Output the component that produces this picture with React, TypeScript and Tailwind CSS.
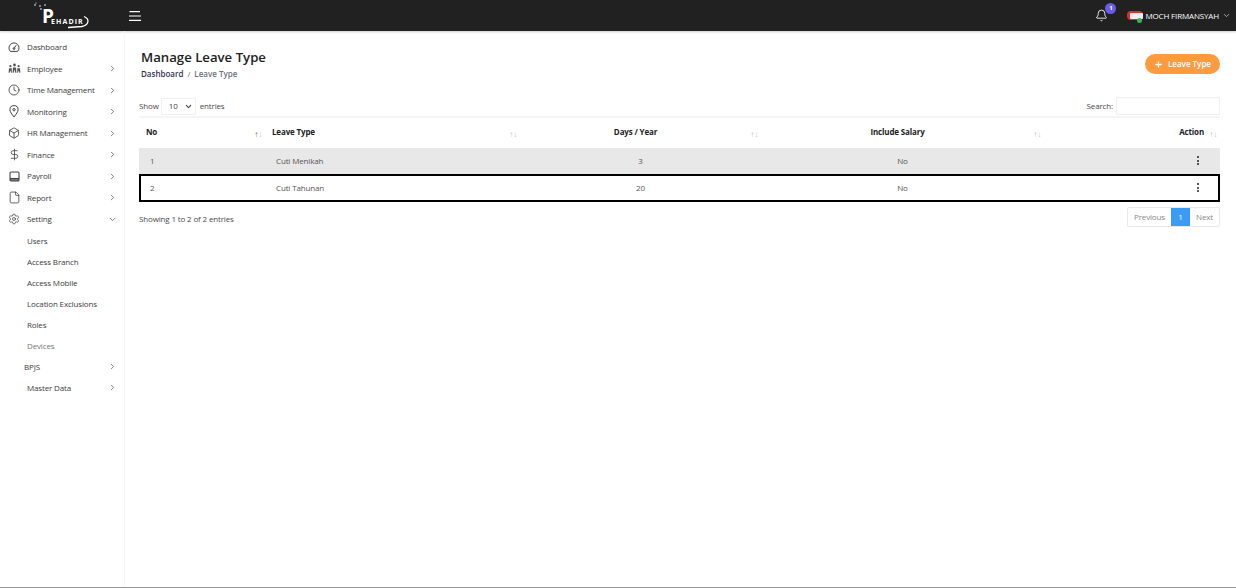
import { useState, type ReactNode } from 'react'
import { Bell, Box, ChevronDown, ChevronRight, Clock, DollarSign, File, Plus, Settings } from 'lucide-react'

interface NavItem {
  label: string
  icon?: ReactNode
  arrow?: 'right' | 'down'
  sub?: boolean
  indent?: string
  color?: string
}

function GaugeIcon() {
  return (
    <svg width="12" height="12" viewBox="0 0 12 12" fill="none" stroke="#444" strokeWidth="1">
      <path d="M2.4 10.4 A5 5 0 1 1 9.6 10.4 Z" strokeLinejoin="round" />
      <path d="M6 7.5 L8.2 4.2" />
      <circle cx="6" cy="7.6" r="0.9" />
    </svg>
  )
}

function PeopleIcon() {
  return (
    <svg width="13" height="11" viewBox="0 0 13 11" fill="#555">
      <circle cx="6.5" cy="2" r="1.4" />
      <circle cx="2.4" cy="3.2" r="1.1" />
      <circle cx="10.6" cy="3.2" r="1.1" />
      <path d="M4.6 9.8 L5 4.6 H8 L8.4 9.8 H7.3 L6.5 6.6 L5.7 9.8 Z" />
      <path d="M0.6 9.8 L1 5.2 H3.8 L3.8 9.8 H3 L2.4 7.2 L1.6 9.8 Z" />
      <path d="M9.2 9.8 L9.2 5.2 H12 L12.4 9.8 H11.4 L10.6 7.2 L10 9.8 Z" />
    </svg>
  )
}

function PinIcon() {
  return (
    <svg width="10" height="13" viewBox="0 0 11 14" fill="none" stroke="#444" strokeWidth="1.1">
      <path d="M5.5 13 C3 9.5 1 7.5 1 5 A4.5 4.5 0 0 1 10 5 C10 7.5 8 9.5 5.5 13 Z" />
      <circle cx="5.5" cy="5" r="1.3" />
    </svg>
  )
}

function PayrollIcon() {
  return (
    <svg width="11" height="11" viewBox="0 0 11 11" fill="none" stroke="#444" strokeWidth="1.1">
      <rect x="1" y="1" width="9" height="9" rx="1" />
      <path d="M1 7.5 H10" />
      <path d="M1 9 H10" strokeWidth="1.4" />
    </svg>
  )
}

const navItems: NavItem[] = [
  { label: 'Dashboard', icon: <GaugeIcon /> },
  { label: 'Employee', icon: <PeopleIcon />, arrow: 'right' },
  { label: 'Time Management', icon: <Clock size={12} strokeWidth={1.7} className="text-[#444]" />, arrow: 'right' },
  { label: 'Monitoring', icon: <PinIcon />, arrow: 'right' },
  { label: 'HR Management', icon: <Box size={12} strokeWidth={1.7} className="text-[#444]" />, arrow: 'right' },
  { label: 'Finance', icon: <DollarSign size={13} strokeWidth={1.5} className="text-[#444]" />, arrow: 'right' },
  { label: 'Payroll', icon: <PayrollIcon />, arrow: 'right' },
  { label: 'Report', icon: <File size={13} strokeWidth={1.5} className="text-[#444]" />, arrow: 'right' },
  { label: 'Setting', icon: <Settings size={12} strokeWidth={1.5} className="text-[#444]" />, arrow: 'down' },
  { label: 'Users', sub: true },
  { label: 'Access Branch', sub: true },
  { label: 'Access Mobile', sub: true },
  { label: 'Location Exclusions', sub: true },
  { label: 'Roles', sub: true },
  { label: 'Devices', sub: true, color: 'text-[#777]' },
  { label: 'BPJS', sub: true, arrow: 'right', indent: 'pl-[24px]' },
  { label: 'Master Data', sub: true, arrow: 'right' },
]

const rows = [
  { no: 1, name: 'Cuti Menikah', days: 3, salary: 'No' },
  { no: 2, name: 'Cuti Tahunan', days: 20, salary: 'No' },
]

function SortArrows({ active }: { active?: boolean }) {
  return (
    <span className="absolute top-[11px] right-[3px] text-[8px] leading-[10px] text-[#c4c4c4]">
      <span className={active ? 'text-[#666]' : ''}>↑</span>↓
    </span>
  )
}

function Logo() {
  return (
    <div className="relative ml-[34px] h-[31px] w-[56px] text-white">
      <svg className="absolute top-0 left-0" width="56" height="31" viewBox="0 0 56 31" fill="none">
        <g fill="#fff">
          <circle cx="1" cy="5" r="0.8" />
          <circle cx="6" cy="6" r="0.8" />
          <circle cx="11" cy="5" r="0.8" />
          <circle cx="7" cy="9" r="0.8" />
          <circle cx="2" cy="3" r="0.6" />
        </g>
        <path d="M50 16.5 C56 19 55 25 48 26.5 L34 27.5" stroke="#fff" strokeWidth="1.3" />
      </svg>
      <span className="absolute top-[5px] left-[8px] text-[19px] leading-[22px] font-bold">P</span>
      <span className="absolute top-[17px] left-[17px] text-[7px] leading-[9px] font-bold tracking-[1.1px]">EHADIR</span>
    </div>
  )
}

export default function App() {
  const [entries, setEntries] = useState('10')

  return (
    <div className="flex h-[588px] w-[1236px] flex-col overflow-hidden border-b border-[#9a9a9a] bg-white font-['Open_Sans',sans-serif]">
      <header className="flex h-[31px] shrink-0 items-center bg-[#212121] shadow-[0_1px_2px_rgba(0,0,0,0.2)]">
        <div className="w-[129px] shrink-0">
          <Logo />
        </div>
        <svg width="12" height="10" viewBox="0 0 12 10" stroke="#fff" strokeWidth="1.1">
          <path d="M0.5 0.6 H11 M0 5 H12 M0 9.4 H12" />
        </svg>
        <div className="ml-auto flex items-center pr-[5px]">
          <div className="relative mr-[19px]">
            <Bell size={13} strokeWidth={1.6} className="text-white" />
            <span className="absolute top-[-6px] left-[10px] flex h-[11px] w-[11px] items-center justify-center rounded-full bg-[#6a5be8] text-[6px] font-bold text-white">1</span>
          </div>
          <div className="relative mr-[2px] h-[9px] w-[16px] rounded-[4px] bg-[#d9302a]">
            <span className="absolute top-[2px] left-[3px] h-[6px] w-[13px] rounded-[1px] bg-[#eeeeee]"></span>
            <span className="absolute top-[7px] left-[10px] h-[5px] w-[5px] rounded-full bg-[#35b454]"></span>
          </div>
          <span className="text-[8px] tracking-[-0.15px] text-white">MOCH FIRMANSYAH</span>
          <ChevronDown size={9} className="ml-[3px] text-[#cccccc]" />
        </div>
      </header>

      <div className="flex min-h-0 flex-1">
        <aside className="w-[125px] shrink-0 border-r border-[#f7f7f7] pt-[5.5px]">
          {navItems.map((item) => (
            <div
              key={item.label}
              className={`flex items-center pr-[7px] text-[8px] tracking-[-0.15px] ${item.sub ? 'h-[21px]' : 'h-[21.5px]'} ${item.color ?? 'text-[#3d3d3d]'} ${item.indent ?? (item.sub ? 'pl-[27px]' : 'pl-[5px]')}`}
            >
              {item.icon && <span className="mr-[4px] flex w-[18px] shrink-0 items-center justify-center">{item.icon}</span>}
              <span className="whitespace-nowrap">{item.label}</span>
              {item.arrow === 'right' && <ChevronRight size={9} strokeWidth={2} className="ml-auto text-[#555]" />}
              {item.arrow === 'down' && <ChevronDown size={9} strokeWidth={2} className="ml-auto text-[#555]" />}
            </div>
          ))}
        </aside>

        <main className="min-w-0 flex-1 pt-[16px] pr-[16px] pl-[14px]">
          <div className="flex items-start justify-between">
            <div className="pl-[2px]">
              <h1 className="text-[13.2px] leading-[20px] font-semibold text-[#222]">Manage Leave Type</h1>
              <div className="mt-[1px] text-[8px] leading-[12px] font-semibold">
                <span className="text-[#33364d]">Dashboard</span>
                <span className="mx-[4px] font-normal text-[#666]">/</span>
                <span className="text-[#6b7280]">Leave Type</span>
              </div>
            </div>
            <button className="mt-[7px] flex h-[20px] w-[75px] items-center justify-center gap-[5px] rounded-full bg-[#ff9a3d] text-[8px] font-semibold text-white">
              <Plus size={9} strokeWidth={3.5} />
              Leave Type
            </button>
          </div>

          <div className="mt-[16px] flex h-[20px] items-center justify-between text-[8px] tracking-[-0.15px] text-[#4b4b4b]">
            <div className="flex items-center gap-[2px]">
              <span>Show</span>
              <div className="flex h-[17px] w-[35px] items-center justify-between border border-[#f0f0f0] pr-[2px] pl-[7px] text-[#444]">
                <span>{entries}</span>
                <ChevronDown size={9} strokeWidth={3} onClick={() => setEntries('10')} />
              </div>
              <span className="ml-[2px]">entries</span>
            </div>
            <div className="flex items-center gap-[3px]">
              <span>Search:</span>
              <div className="h-[18px] w-[104px] border border-[#f0f0f0] bg-white"></div>
            </div>
          </div>

          <table className="w-[1081px] table-fixed border-collapse text-[8px] tracking-[-0.15px]">
            <colgroup>
              <col className="w-[126px]" />
              <col className="w-[255px]" />
              <col className="w-[241px]" />
              <col className="w-[283px]" />
              <col className="w-[176px]" />
            </colgroup>
            <thead>
              <tr className="h-[31px] border-t-2 border-[#f5f5f5] text-[#222]">
                <th className="relative pb-[2px] pl-[7px] text-left font-bold">No<SortArrows active /></th>
                <th className="relative pb-[2px] pl-[7px] text-left font-bold">Leave Type<SortArrows /></th>
                <th className="relative pr-[10px] pb-[2px] text-center font-bold">Days / Year<SortArrows /></th>
                <th className="relative pr-[10px] pb-[2px] text-center font-bold">Include Salary<SortArrows /></th>
                <th className="relative pr-[16px] pb-[2px] text-right font-bold">Action<SortArrows /></th>
              </tr>
            </thead>
            <tbody className="text-[#555]">
              {rows.map((row, i) => (
                <tr
                  key={row.no}
                  className={i === 0 ? 'h-[26px] bg-[#e8e8e8]' : 'h-[28px] outline-2 -outline-offset-2 outline-black'}
                >
                  <td className="pl-[11px]">{row.no}</td>
                  <td className="pl-[11px]">{row.name}</td>
                  <td className="text-center">{row.days}</td>
                  <td className="text-center">{row.salary}</td>
                  <td className="pr-[21px] text-right">
                    <span className="mb-[2px] inline-flex flex-col gap-[1.5px] align-middle">
                      <span className="h-[2px] w-[2px] rounded-full bg-[#222]"></span>
                      <span className="h-[2px] w-[2px] rounded-full bg-[#222]"></span>
                      <span className="h-[2px] w-[2px] rounded-full bg-[#222]"></span>
                    </span>
                  </td>
                </tr>
              ))}
            </tbody>
          </table>

          <div className="mt-[5px] flex items-start justify-between text-[8px] tracking-[-0.15px] text-[#4b4b4b]">
            <span className="mt-[6px]">Showing 1 to 2 of 2 entries</span>
            <div className="flex h-[20px] items-stretch rounded-[2px] border border-[#e8e8e8] text-[#888]">
              <span className="flex w-[43px] items-center justify-center">Previous</span>
              <span className="flex w-[19px] items-center justify-center bg-[#3b9bf5] text-white">1</span>
              <span className="flex w-[29px] items-center justify-center">Next</span>
            </div>
          </div>
        </main>
      </div>
    </div>
  )
}
